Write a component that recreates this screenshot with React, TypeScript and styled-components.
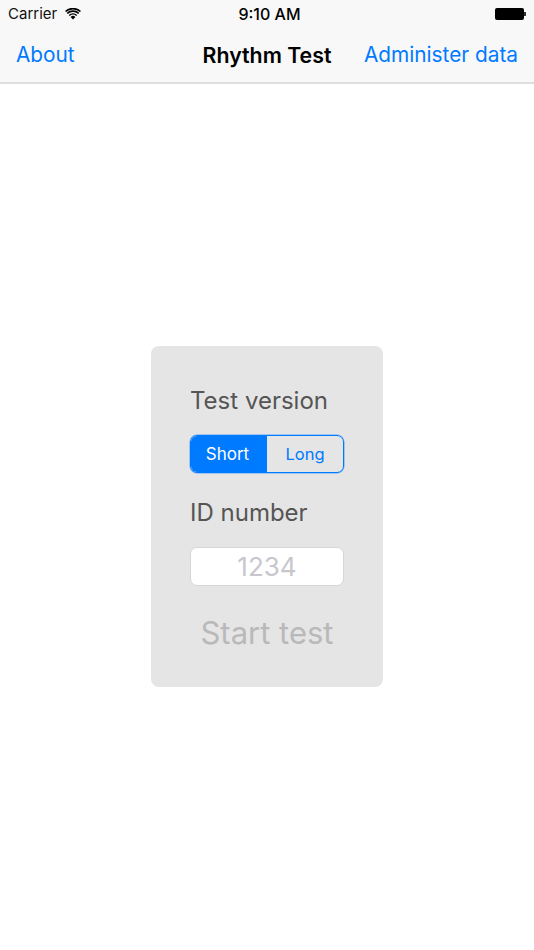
import styled, { createGlobalStyle } from 'styled-components'

const GlobalStyle = createGlobalStyle`
  html, body {
    margin: 0;
    padding: 0;
    background: #fff;
  }
  body {
    font-family: Inter, "Liberation Sans", sans-serif;
  }
`

const WifiIcon = () => (
  <svg width="16" height="12" viewBox="0 0 16 12">
    <path d="M8 11.6 L5.6 8.9 A3.6 3.6 0 0 1 10.4 8.9 Z" fill="#000" />
    <path d="M3.7 6.9 A6.3 6.3 0 0 1 12.3 6.9 L11.2 8.1 A4.7 4.7 0 0 0 4.8 8.1 Z" fill="#000" />
    <path d="M1.7 4.8 A9.2 9.2 0 0 1 14.3 4.8 L13.2 6 A7.6 7.6 0 0 0 2.8 6 Z" fill="#000" />
    <path d="M0 2.9 A11.8 11.8 0 0 1 16 2.9 L14.9 4.1 A10.2 10.2 0 0 0 1.1 4.1 Z" fill="#000" />
  </svg>
)

const App = () => {
  return (
    <>
      <GlobalStyle />
      <Page>
        <Header>
          <StatusBar>
            <StatusLeft>
              <Carrier>Carrier</Carrier>
              <WifiIcon />
            </StatusLeft>
            <Clock>9:10 AM</Clock>
            <Battery>
              <BatteryBody />
              <BatteryCap />
            </Battery>
          </StatusBar>
          <NavBar>
            <NavLink>About</NavLink>
            <Title>Rhythm Test</Title>
            <NavLink $right>Administer data</NavLink>
          </NavBar>
        </Header>
        <Main>
          <Card>
            <Label>Test version</Label>
            <Segmented>
              <Segment $active>Short</Segment>
              <Segment>Long</Segment>
            </Segmented>
            <IdLabel>ID number</IdLabel>
            <IdInput placeholder="1234" readOnly />
            <StartButton>Start test</StartButton>
          </Card>
        </Main>
      </Page>
    </>
  )
}
export default App

const Page = styled.div`
  width: 534px;
  height: 950px;
  display: flex;
  flex-direction: column;
  overflow: hidden;
  background: #fff;
`
const Header = styled.header`
  height: 82px;
  background: #f8f8f8;
  border-bottom: 2px solid #dfdfdf;
  flex-shrink: 0;
`
const StatusBar = styled.div`
  height: 27px;
  display: grid;
  grid-template-columns: 1fr auto 1fr;
  align-items: center;
  padding: 0 8px;
`
const StatusLeft = styled.div`
  display: flex;
  align-items: center;
  gap: 8px;
`
const Carrier = styled.span`
  font-size: 15px;
  color: #111;
`
const Clock = styled.span`
  font-size: 16px;
  font-weight: 500;
  color: #000;
  margin-left: 5px;
`
const Battery = styled.div`
  display: flex;
  align-items: center;
  justify-content: flex-end;
`
const BatteryBody = styled.div`
  width: 29px;
  height: 12px;
  background: #000;
  border-radius: 2px;
`
const BatteryCap = styled.div`
  width: 2px;
  height: 4px;
  background: #333;
`
const NavBar = styled.nav`
  height: 55px;
  display: grid;
  grid-template-columns: 1fr auto 1fr;
  align-items: center;
  padding: 0 16px;
`
const NavLink = styled.a<{ $right?: boolean }>`
  font-size: 20.8px;
  color: #007aff;
  justify-self: ${p => (p.$right ? 'end' : 'start')};
`
const Title = styled.div`
  font-size: 21.3px;
  font-weight: 600;
  color: #000;
`
const Main = styled.main`
  flex: 1;
  display: flex;
  justify-content: center;
  padding-top: 262px;
`
const Card = styled.div`
  width: 232px;
  height: 341px;
  box-sizing: border-box;
  padding: 39px 39px 0;
  background: #e5e5e5;
  border-radius: 8px;
  display: flex;
  flex-direction: column;
  align-items: stretch;
`
const Label = styled.div`
  font-size: 24px;
  line-height: 32px;
  color: #555;
`
const IdLabel = styled(Label)`
  margin-top: 24px;
`
const Segmented = styled.div`
  margin-top: 18px;
  height: 38px;
  width: 154px;
  box-sizing: border-box;
  display: flex;
  border: 1px solid #007aff;
  box-shadow: 0 0 0 0.5px rgba(0, 122, 255, 0.6);
  border-radius: 7px;
  overflow: hidden;
`
const Segment = styled.div<{ $active?: boolean }>`
  flex: ${p => (p.$active ? '0 0 76px' : '1')};
  box-sizing: border-box;
  display: flex;
  align-items: center;
  justify-content: center;
  font-size: ${p => (p.$active ? '17px' : '16.5px')};
  color: ${p => (p.$active ? '#fff' : '#007aff')};
  background: ${p => (p.$active ? '#007aff' : 'transparent')};
  padding-right: ${p => (p.$active ? '3px' : '0')};
`
const IdInput = styled.input`
  margin-top: 18px;
  height: 39px;
  width: 154px;
  box-sizing: border-box;
  border: 1px solid #d6d6d6;
  border-radius: 7px;
  background: #fff;
  text-align: center;
  font-family: inherit;
  font-size: 26px;
  padding: 0 0 1px;
  outline: none;
  &::placeholder {
    color: #c7c7cd;
    opacity: 1;
  }
`
const StartButton = styled.div`
  margin-top: 27px;
  text-align: center;
  font-size: 31px;
  line-height: 40px;
  color: #b9b9b9;
`
